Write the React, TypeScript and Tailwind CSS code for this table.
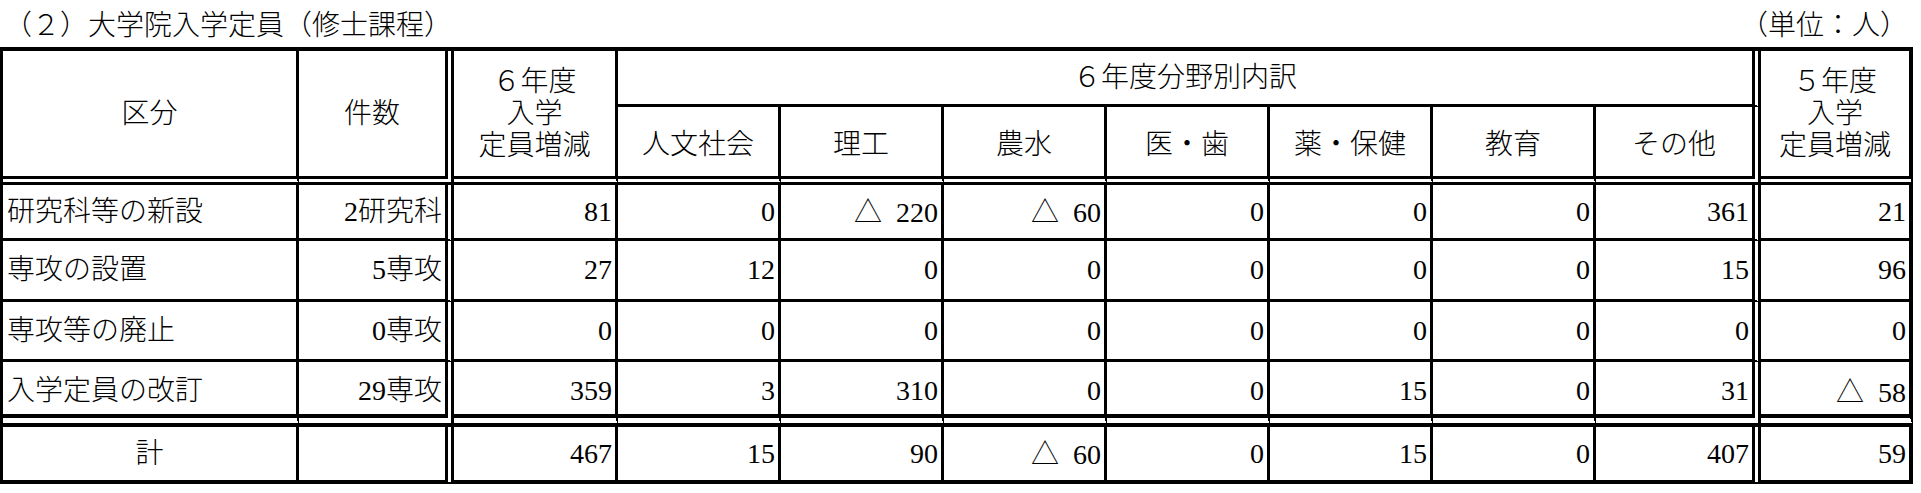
type Row = {
  label: string;
  count: string;
  values: number[];
};

// 6年度増減, 人文社会, 理工, 農水, 医・歯, 薬・保健, 教育, その他, 5年度増減
const rows: Row[] = [
  { label: "研究科等の新設", count: "2研究科", values: [81, 0, -220, -60, 0, 0, 0, 361, 21] },
  { label: "専攻の設置", count: "5専攻", values: [27, 12, 0, 0, 0, 0, 0, 15, 96] },
  { label: "専攻等の廃止", count: "0専攻", values: [0, 0, 0, 0, 0, 0, 0, 0, 0] },
  { label: "入学定員の改訂", count: "29専攻", values: [359, 3, 310, 0, 0, 15, 0, 31, -58] },
];

const total = [467, 15, 90, -60, 0, 15, 0, 407, 59];

const fields = ["人文社会", "理工", "農水", "医・歯", "薬・保健", "教育", "その他"];

// right border of each of the 11 columns
const rightBorder = [
  "border-r-[3px]",
  "border-r-[9px] [border-right-style:double]",
  "border-r-[3px]",
  "border-r-[3px]",
  "border-r-[3px]",
  "border-r-[3px]",
  "border-r-[3px]",
  "border-r-[3px]",
  "border-r-[3px]",
  "border-r-[9px] [border-right-style:double]",
  "border-r-[4px]",
];

const rowBottom = [
  "border-b-[3px]",
  "border-b-[3px]",
  "border-b-[3px]",
  "border-b-[13px] [border-bottom-style:double] pt-[6px]",
];

const headBottom = "border-b-[9px] [border-bottom-style:double]";

function Num({ value }: { value: number }) {
  if (value < 0) {
    return (
      <span>
        <span className="mr-[7px] [font-family:'Noto_Sans_CJK_JP',sans-serif]">△</span> {Math.abs(value)}
      </span>
    );
  }
  return <span>{value}</span>;
}

function StackedHead({ year }: { year: string }) {
  return (
    <div className="flex flex-col items-center text-center leading-[32px]">
      <span>{year}年度</span>
      <span>入学</span>
      <span>定員増減</span>
    </div>
  );
}

export default function App() {
  return (
    <div className="bg-white text-[28px] font-light text-black [font-family:'Liberation_Serif','Noto_Sans_CJK_JP',serif]">
      <div className="flex h-[47px] w-[1913px] items-center justify-between pt-[5px] pl-[4px] pr-[5px] leading-[32px]">
        <span>（２）大学院入学定員（修士課程）</span>
        <span>（単位：人）</span>
      </div>

      <div className="grid w-[1913px] grid-cols-[296px_155px_164px_163px_163px_163px_163px_163px_163px_165px_152px] grid-rows-[56px_78px_56px_61px_60px_65px_57px] border-l-[3px] border-t-[4px] border-black leading-[32px]">
        {/* header */}
        <div className={`row-span-2 flex items-center justify-center border-black ${rightBorder[0]} ${headBottom}`}>
          区分
        </div>
        <div className={`row-span-2 flex items-center justify-center border-black ${rightBorder[1]} ${headBottom}`}>
          件数
        </div>
        <div className={`row-span-2 flex items-center justify-center border-black ${rightBorder[2]} ${headBottom}`}>
          <StackedHead year="６" />
        </div>
        <div className={`col-span-7 flex items-center justify-center border-b-[3px] border-black ${rightBorder[9]}`}>
          ６年度分野別内訳
        </div>
        <div className={`row-span-2 flex items-center justify-center border-black ${rightBorder[10]} ${headBottom}`}>
          <StackedHead year="５" />
        </div>
        {fields.map((f, i) => (
          <div
            key={f}
            className={`flex items-center justify-center pt-[6px] border-black ${rightBorder[i + 3]} ${headBottom}`}
          >
            {f}
          </div>
        ))}

        {/* body */}
        {rows.map((row, r) => (
          <div key={row.label} className="contents">
            <div className={`flex items-center pl-[4px] border-black ${rightBorder[0]} ${rowBottom[r]}`}>
              {row.label}
            </div>
            <div className={`flex items-center justify-end pr-[3px] border-black ${rightBorder[1]} ${rowBottom[r]}`}>
              {row.count}
            </div>
            {row.values.map((v, i) => (
              <div
                key={i}
                className={`flex items-center justify-end pr-[3px] border-black ${rightBorder[i + 2]} ${rowBottom[r]}`}
              >
                <Num value={v} />
              </div>
            ))}
          </div>
        ))}

        {/* total */}
        <div className={`flex items-center justify-center border-b-[4px] border-black ${rightBorder[0]}`}>計</div>
        <div className={`border-b-[4px] border-black ${rightBorder[1]}`} />
        {total.map((v, i) => (
          <div
            key={i}
            className={`flex items-center justify-end pr-[3px] border-b-[4px] border-black ${rightBorder[i + 2]}`}
          >
            <Num value={v} />
          </div>
        ))}
      </div>
    </div>
  );
}
